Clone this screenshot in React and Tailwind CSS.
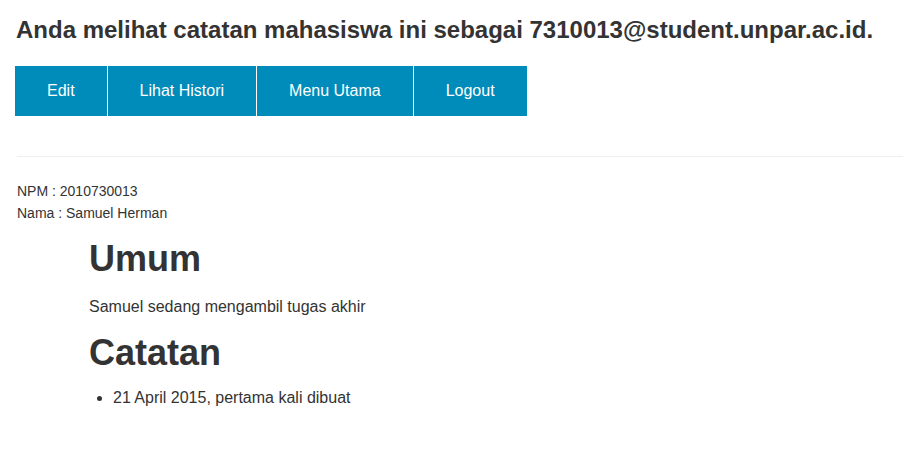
export default function App() {
    const menu = ["Edit", "Lihat Histori", "Menu Utama", "Logout"];

    return (
        <div className="min-h-screen bg-white px-[17px] pt-[17px] text-[#333] font-['Liberation_Sans',Arial,sans-serif]">
            {/* Judul */}
            <h3 className="text-[24px] font-bold leading-[26.4px] -ml-px">
                Anda melihat catatan mahasiswa ini sebagai 7310013@student.unpar.ac.id.
            </h3>

            {/* Tombol */}
            <div className="flex mt-[22.6px] -ml-[2px]">
                {menu.map((label, i) => (
                    <a
                        key={label}
                        href="#"
                        className={
                            "h-[50px] px-8 flex items-center bg-[#008cba] text-white text-[16px] hover:bg-[#007095] " +
                            (i > 0 ? "border-l-[1.6px] border-white" : "")
                        }
                    >
                        {label}
                    </a>
                ))}
            </div>

            <hr className="mt-[40px] border-0 border-t border-[#eee] w-[886px]" />

            {/* Data mahasiswa */}
            <div className="mt-[23px] text-[14px] leading-[22px]">
                NPM : 2010730013
                <br />
                Nama : Samuel Herman
            </div>

            <div className="pl-[72px]">
                <h1 className="mt-[15px] text-[36px] font-bold leading-[39.6px]">Umum</h1>
                <p className="mt-[16px] text-[16px] leading-[24px]">Samuel sedang mengambil tugas akhir</p>

                <h1 className="mt-[14px] text-[36px] font-bold leading-[39.6px]">Catatan</h1>
                <ul className="mt-[14px] pl-6 list-disc text-[16px] leading-[24px]">
                    <li>21 April 2015, pertama kali dibuat</li>
                </ul>
            </div>
        </div>
    );
}
